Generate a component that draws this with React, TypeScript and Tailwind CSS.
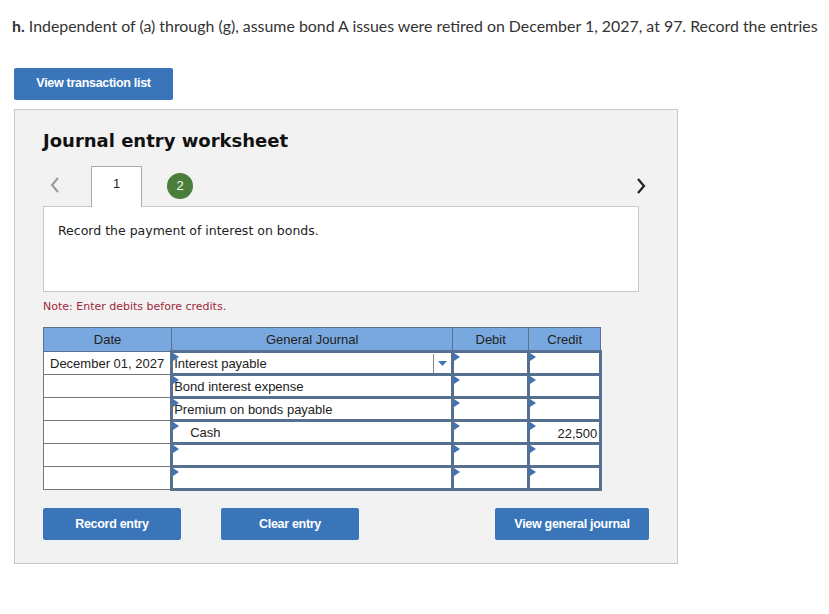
import React from "react";

const rows = [
  { date: "December 01, 2027", account: "Interest payable", indent: false, debit: "", credit: "", select: true },
  { date: "", account: "Bond interest expense", indent: false, debit: "", credit: "" },
  { date: "", account: "Premium on bonds payable", indent: false, debit: "", credit: "" },
  { date: "", account: "Cash", indent: true, debit: "", credit: "22,500" },
  { date: "", account: "", indent: false, debit: "", credit: "" },
  { date: "", account: "", indent: false, debit: "", credit: "" },
];

function Marker() {
  return (
    <span className="absolute left-0 top-0 w-0 h-0 border-t-[4px] border-b-[4px] border-l-[6px] border-t-transparent border-b-transparent border-l-[#3f73b5]" />
  );
}

function BlueButton({ label, width }: { label: string; width: string }) {
  return (
    <button
      className={`${width} h-[32px] rounded-[2px] bg-[#3a75ba] text-white text-[12.5px] font-bold tracking-[-0.3px] font-['Liberation_Sans',Arial,sans-serif]`}
    >
      {label}
    </button>
  );
}

export default function App() {
  return (
    <div className="w-[829px] h-[614px] bg-white overflow-hidden font-['Liberation_Sans',Arial,sans-serif] text-[#222]">
      <p className="pl-[12px] pt-[14px] text-[15.9px] text-[#333] whitespace-nowrap font-['Lato','Open_Sans',sans-serif]">
        <span className="font-bold">h.</span> Independent of (a) through (g), assume bond A issues were retired on December 1, 2027, at 97. Record the entries
      </p>

      <div className="pl-[14px] pt-[30px]">
        <BlueButton label="View transaction list" width="w-[159px]" />
      </div>

      <div className="ml-[14px] mt-[9px] w-[664px] h-[455px] bg-[#f2f2f2] border border-[#c8c8c8] pl-[28px] pt-[17px]">
        <h2 className="text-[18px] font-bold text-[#111] font-['DejaVu_Sans',Verdana,sans-serif]">
          Journal entry worksheet
        </h2>

        <div className="mt-[12px] w-[596px] flex items-end h-[41px] relative">
          <span className="absolute left-[6px] top-[10px]">
            <svg width="12" height="18" viewBox="0 0 12 18">
              <path d="M9 2 L3 9 L9 16" stroke="#999" strokeWidth="2" fill="none" />
            </svg>
          </span>
          <div className="ml-[48px] w-[51px] h-[41px] bg-white border border-[#aaa] border-b-0 flex justify-center pt-[7px] text-[13px] relative z-10">
            1
          </div>
          <div className="ml-[25px] mb-[8px] w-[26px] h-[26px] rounded-full bg-[#4a7e3a] text-white text-[13px] flex items-center justify-center">
            2
          </div>
          <span className="absolute right-[-8px] top-[11px]">
            <svg width="12" height="18" viewBox="0 0 12 18">
              <path d="M3 2 L9 9 L3 16" stroke="#222" strokeWidth="2.2" fill="none" />
            </svg>
          </span>
        </div>

        <div className="-mt-px w-[596px] h-[86px] bg-white border border-[#c8c8c8] pl-[14px] pt-[15px] text-[12.5px] text-[#222] font-['DejaVu_Sans',Verdana,sans-serif]">
          Record the payment of interest on bonds.
        </div>

        <p className="mt-[7px] text-[11px] text-[#a0283a] font-['DejaVu_Sans',Verdana,sans-serif]">
          Note: Enter debits before credits.
        </p>

        <table className="mt-[12px] border-collapse text-[13px] text-[#222]">
          <thead>
            <tr className="h-[24px] bg-[#78a8df]">
              <th className="w-[127px] border border-[#5b708c] font-normal text-[13px]">Date</th>
              <th className="w-[281px] border border-[#5b708c] font-normal text-[13px]">General Journal</th>
              <th className="w-[76px] border border-[#5b708c] font-normal text-[13px]">Debit</th>
              <th className="w-[72px] border border-[#5b708c] font-normal text-[13px]">Credit</th>
            </tr>
          </thead>
          <tbody>
            {rows.map((r, i) => (
              <tr key={i} className="h-[23px] bg-white">
                <td className="border border-[#777] px-[6px] whitespace-nowrap text-center">{r.date}</td>
                <td className="border-[3px] border-[#56708f] p-0 relative">
                  <Marker />
                  <div className={`flex items-center h-[17px] ${r.indent ? "pl-[17px]" : "pl-[1px]"}`}>
                    <span className="flex-1">{r.account}</span>
                    {r.select && (
                      <span className="flex items-center h-[19px] border-l border-[#888] w-[18px] justify-center">
                        <svg width="9" height="5" viewBox="0 0 9 5">
                          <path d="M0 0 L9 0 L4.5 5 Z" fill="#3f73b5" />
                        </svg>
                      </span>
                    )}
                  </div>
                </td>
                <td className="border-[3px] border-[#56708f] p-0 relative">
                  <Marker />
                  <div className="h-[17px] text-right pr-[2px]">{r.debit}</div>
                </td>
                <td className="border-[3px] border-[#56708f] p-0 relative">
                  <Marker />
                  <div className="h-[17px] text-right pr-[2px]">{r.credit}</div>
                </td>
              </tr>
            ))}
          </tbody>
        </table>

        <div className="mt-[17px] flex w-[606px]">
          <BlueButton label="Record entry" width="w-[138px]" />
          <div className="ml-[40px]">
            <BlueButton label="Clear entry" width="w-[138px]" />
          </div>
          <div className="ml-auto">
            <BlueButton label="View general journal" width="w-[154px]" />
          </div>
        </div>
      </div>
    </div>
  );
}
